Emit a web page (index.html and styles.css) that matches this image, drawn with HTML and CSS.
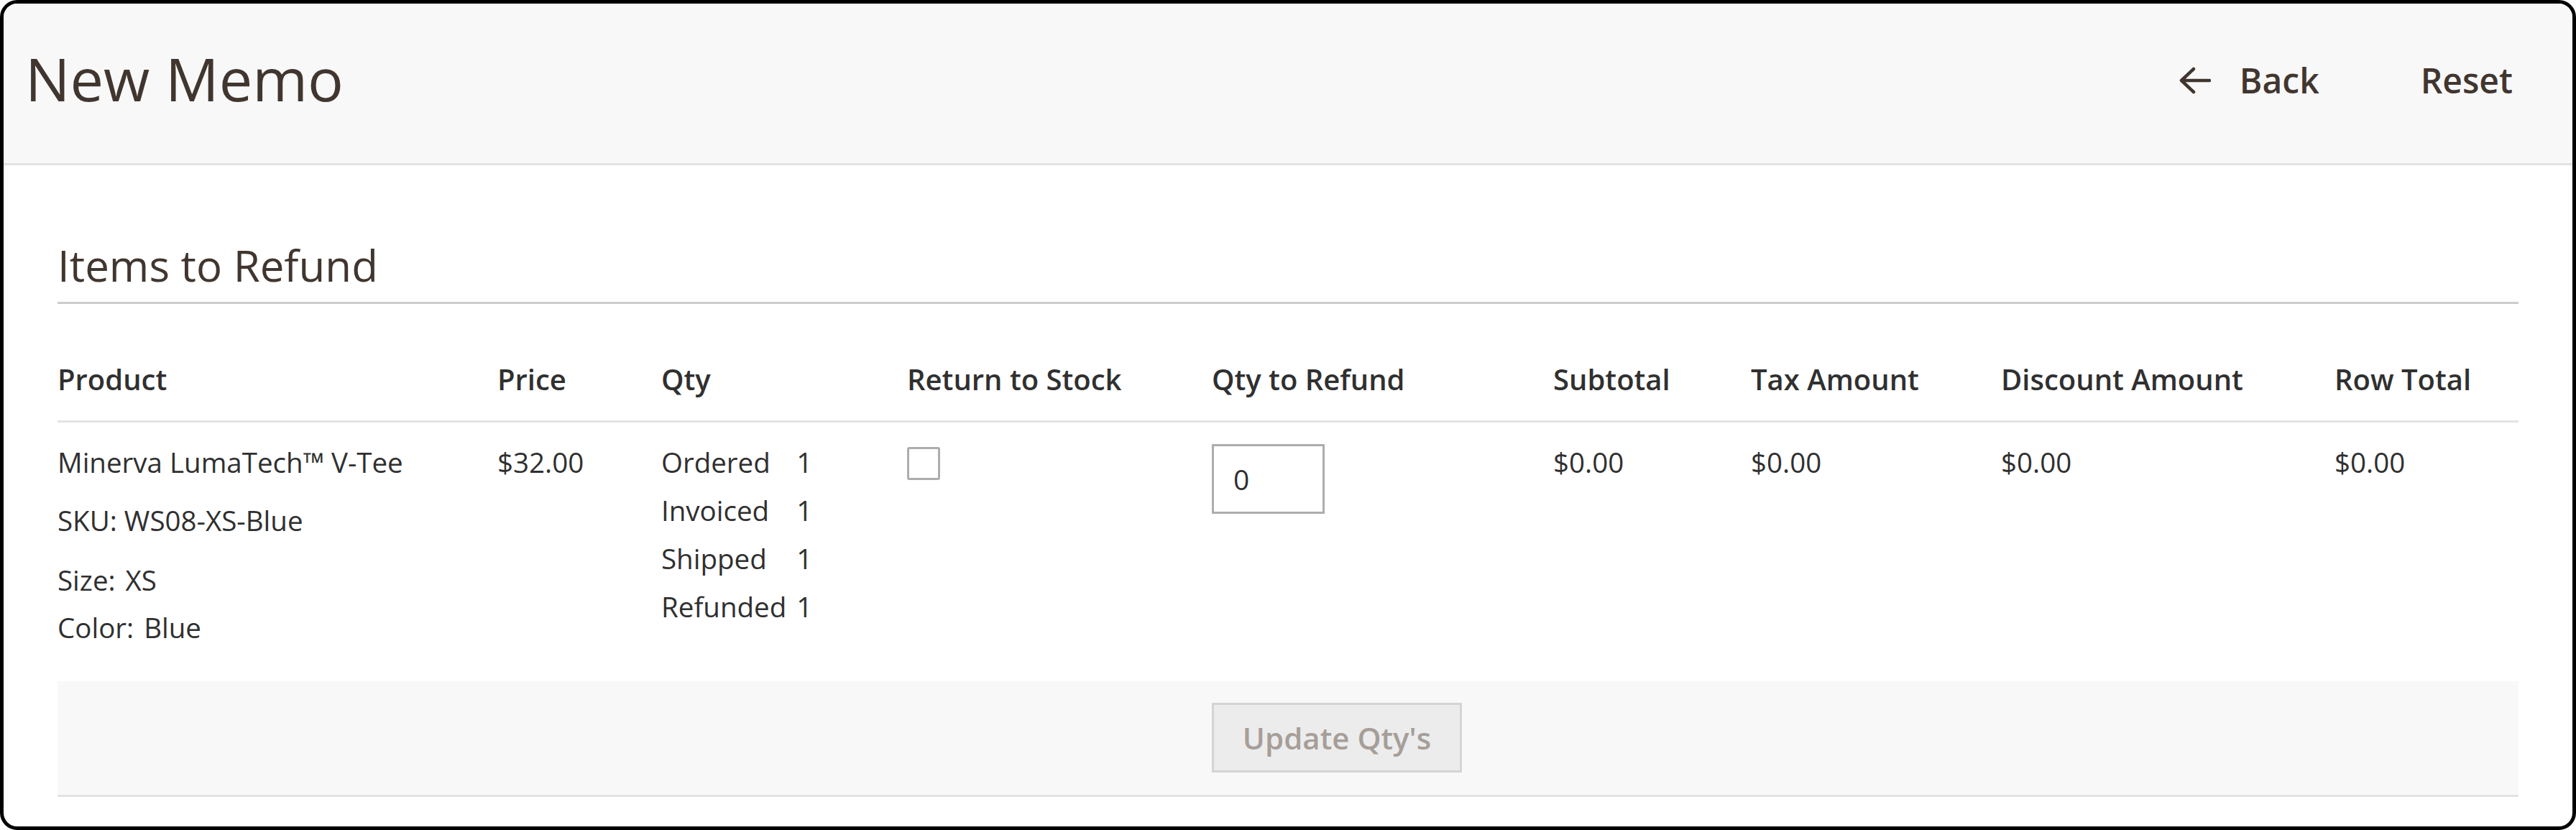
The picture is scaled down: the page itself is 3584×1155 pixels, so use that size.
FILE: index.html
```html
<!DOCTYPE html>
<html lang="en">
<head>
<meta charset="utf-8">
<title>New Memo</title>
<link rel="stylesheet" href="styles.css">
</head>
<body>
<div class="frame">
  <header class="page-header">
    <h1 class="page-title">New Memo</h1>
    <div class="page-actions">
      <button class="action action-back" type="button">
        <svg class="icon-back" viewBox="0 0 44 40" aria-hidden="true">
          <path d="M20 4 L3 20 L20 36 M3 20 H42" fill="none" stroke="#41362f" stroke-width="4.5" stroke-linecap="round" stroke-linejoin="round"/>
        </svg>
        <span>Back</span>
      </button>
      <button class="action action-reset" type="button">Reset</button>
    </div>
  </header>
  <main class="content">
    <section class="section">
      <h2 class="section-title">Items to Refund</h2>
      <table class="items">
        <colgroup>
          <col class="c-product">
          <col class="c-price">
          <col class="c-qty">
          <col class="c-stock">
          <col class="c-refund">
          <col class="c-subtotal">
          <col class="c-tax">
          <col class="c-discount">
          <col class="c-total">
        </colgroup>
        <thead>
          <tr>
            <th>Product</th>
            <th>Price</th>
            <th>Qty</th>
            <th>Return to Stock</th>
            <th>Qty to Refund</th>
            <th>Subtotal</th>
            <th>Tax Amount</th>
            <th>Discount Amount</th>
            <th>Row Total</th>
          </tr>
        </thead>
        <tbody>
          <tr>
            <td>
              <div class="product-name">Minerva LumaTech™ V-Tee</div>
              <div class="product-sku">SKU: WS08-XS-Blue</div>
              <dl class="options">
                <div class="option"><dt>Size:</dt><dd>XS</dd></div>
                <div class="option"><dt>Color:</dt><dd>Blue</dd></div>
              </dl>
            </td>
            <td>$32.00</td>
            <td>
              <table class="qty-table">
                <tr><th>Ordered</th><td>1</td></tr>
                <tr><th>Invoiced</th><td>1</td></tr>
                <tr><th>Shipped</th><td>1</td></tr>
                <tr><th>Refunded</th><td>1</td></tr>
              </table>
            </td>
            <td><input class="checkbox" type="checkbox" aria-label="Return to Stock"></td>
            <td><input class="qty-input" type="text" value="0" aria-label="Qty to Refund"></td>
            <td>$0.00</td>
            <td>$0.00</td>
            <td>$0.00</td>
            <td>$0.00</td>
          </tr>
        </tbody>
        <tfoot>
          <tr>
            <td colspan="4"></td>
            <td colspan="5"><button class="update-btn" type="button" disabled>Update Qty's</button></td>
          </tr>
        </tfoot>
      </table>
    </section>
  </main>
</div>
</body>
</html>
```
FILE: styles.css
```css
* {
  box-sizing: border-box;
}

html,
body {
  margin: 0;
  padding: 0;
  background: #ffffff;
}

body {
  font-family: "Open Sans", "Noto Sans", sans-serif;
  color: #303030;
}

.frame {
  width: 3584px;
  height: 1155px;
  border: 5px solid #000000;
  border-radius: 24px;
  overflow: hidden;
  background: #ffffff;
}

/* Header */
.page-header {
  display: flex;
  justify-content: space-between;
  align-items: flex-start;
  height: 225px;
  padding: 0 83px 0 30px;
  background: #f8f8f8;
  border-bottom: 3px solid #e3e3e3;
}

.page-title {
  margin: 0;
  padding-top: 54px;
  font-size: 83px;
  font-weight: 400;
  line-height: 100px;
  color: #41362f;
}

.page-actions {
  display: flex;
  align-items: center;
  padding-top: 77px;
}

.action {
  display: flex;
  align-items: center;
  padding: 0;
  border: 0;
  background: none;
  font-family: "Open Sans", "Noto Sans", sans-serif;
  font-size: 48px;
  font-weight: 600;
  line-height: 60px;
  color: #41362f;
}

.icon-back {
  width: 44px;
  height: 40px;
  margin-right: 40px;
}

.action-reset {
  margin-left: 141px;
}

/* Content */
.content {
  padding: 0 75px;
}

.section-title {
  margin: 0;
  padding: 103px 0 15px;
  font-size: 60px;
  font-weight: 400;
  line-height: 72px;
  color: #41362f;
  border-bottom: 3px solid #cccccc;
}

.items {
  width: 3424px;
  margin-top: 48px;
  table-layout: fixed;
  border-collapse: separate;
  border-spacing: 0;
}

.c-product { width: 612px; }
.c-price { width: 228px; }
.c-qty { width: 342px; }
.c-stock { width: 424px; }
.c-refund { width: 475px; }
.c-subtotal { width: 275px; }
.c-tax { width: 348px; }
.c-discount { width: 464px; }
.c-total { width: 256px; }

.items > thead > tr > th {
  padding: 30px 0 31px;
  font-size: 40px;
  font-weight: 600;
  line-height: 53px;
  text-align: left;
  color: #303030;
  border-bottom: 3px solid #e3e3e3;
  white-space: nowrap;
}

.items > tbody > tr > td {
  padding: 22px 0 42px;
  font-size: 38.5px;
  line-height: 66px;
  vertical-align: top;
  text-align: left;
  color: #303030;
}

.product-name {
  margin-bottom: 15px;
}

.product-sku {
  margin-bottom: 17px;
}

.options {
  margin: 0;
}

.option {
  display: flex;
}

.option dt {
  margin: 0 14px 0 0;
}

.option dd {
  margin: 0;
}

.qty-table {
  border-collapse: collapse;
  border-spacing: 0;
}

.qty-table th,
.qty-table td {
  padding: 0;
  font-size: 38.5px;
  font-weight: 400;
  line-height: 67px;
  text-align: left;
  color: #303030;
}

.qty-table th {
  padding-right: 14px;
}

.checkbox {
  display: block;
  appearance: none;
  -webkit-appearance: none;
  width: 46px;
  height: 46px;
  margin: 12px 0 0;
  border: 3px solid #adadad;
  border-radius: 3px;
  background: #ffffff;
}

.qty-input {
  display: block;
  width: 157px;
  height: 97px;
  margin: 8px 0 0;
  padding: 0 27px;
  border: 3px solid #adadad;
  border-radius: 0;
  background: #ffffff;
  font-family: "Open Sans", "Noto Sans", sans-serif;
  font-size: 39px;
  color: #303030;
}

.items > tfoot > tr > td {
  padding: 30px 0 31px;
  background: #f8f8f8;
  border-bottom: 3px solid #e3e3e3;
}

.update-btn {
  display: block;
  width: 348px;
  height: 97px;
  padding: 0;
  border: 3px solid #d4d4d4;
  background: #ececec;
  font-family: "Open Sans", "Noto Sans", sans-serif;
  font-size: 42px;
  font-weight: 600;
  color: #a69e98;
  text-align: center;
}
```
